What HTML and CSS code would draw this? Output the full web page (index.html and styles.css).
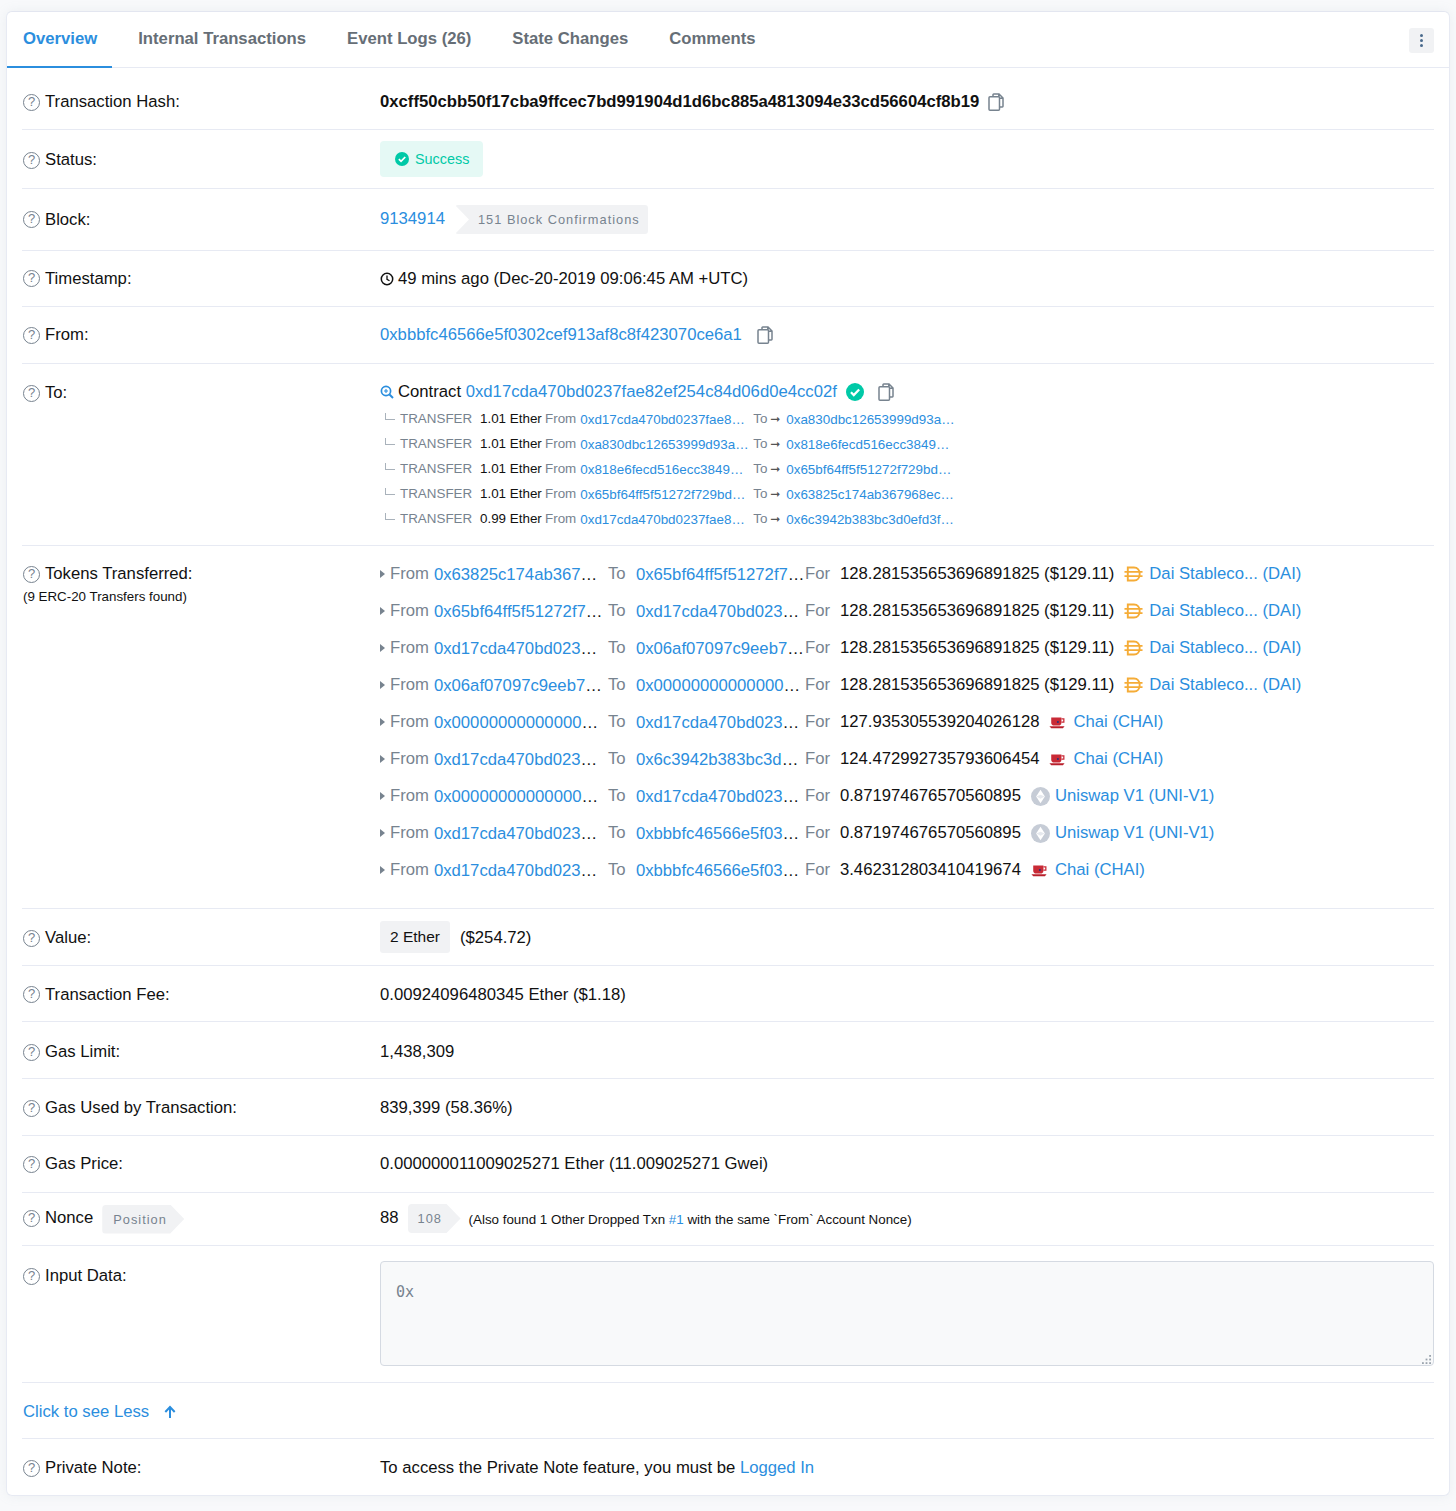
FILE: index.html
```html
<!DOCTYPE html>
<html lang="en">
<head>
<meta charset="utf-8">
<title>Transaction Details</title>
<link rel="stylesheet" href="styles.css">
</head>
<body>
<svg class="defs" width="0" height="0" aria-hidden="true">
  <symbol id="copy" viewBox="0 0 16 18"><path d="M5 3.500V1.700c0-.4.300-.7.700-.7h5.300l4 4v8.300c0 .4-.3.700-.7.700h-2.300M10.800 1v4.300h4.200" fill="none" stroke="currentColor" stroke-width="1.500"/><rect x="1" y="3.800" width="10.500" height="13.400" rx="1" fill="#fff" stroke="currentColor" stroke-width="1.500"/></symbol>
  <symbol id="check" viewBox="0 0 16 16"><circle cx="8" cy="8" r="8" fill="currentColor"/><path d="M4.400 8.200l2.500 2.500 4.800-5" fill="none" stroke="#fff" stroke-width="2"/></symbol>
  <symbol id="dai" viewBox="0 0 20 16"><path d="M4 1.200h6.500c3.800 0 6 2.900 6 6.800s-2.200 6.800-6 6.800H4zM.5 5.800h19M.5 10.200h19" fill="none" stroke="#f5ac37" stroke-width="2"/></symbol>
  <symbol id="chai" viewBox="0 0 18 14"><path d="M2.500 1.500h11.500v5.800c0 1.900-1.400 3.200-3.200 3.200H5.700c-1.800 0-3.200-1.300-3.200-3.200z" fill="#c92a36"/><path d="M14 3h2.700v3.600H14" fill="none" stroke="#c92a36" stroke-width="1.400"/><path d="M.5 11.300h17l-1.800 2.200H2.500z" fill="#b81f2b"/><circle cx="10" cy="6.500" r="1.100" fill="#26307a"/></symbol>
  <symbol id="uni" viewBox="0 0 20 20"><circle cx="10" cy="10" r="10" fill="#c6ccd6"/><path d="M10 2.800l4.600 7.300L10 17.200l-4.600-7.100z" fill="#fff"/><path d="M10 12.400l-4.400-2.300L10 8.200l4.400 1.900z" fill="#e6e9ee"/></symbol>
</svg>

<main class="card">
  <nav class="tabs">
    <a class="tab tab-active">Overview</a>
    <a class="tab">Internal Transactions</a>
    <a class="tab">Event Logs (26)</a>
    <a class="tab">State Changes</a>
    <a class="tab">Comments</a>
    <button class="kebab" aria-label="More"><i></i><i></i><i></i></button>
  </nav>

  <section class="rows">
    <div class="row h62 row-hash"><div class="label"><span class="help">?</span>Transaction Hash:</div><div class="value"><b class="hash">0xcff50cbb50f17cba9ffcec7bd991904d1d6bc885a4813094e33cd56604cf8b19</b><svg class="ic-copy hash-copy"><use href="#copy"/></svg></div></div>

    <div class="row h59"><div class="label drop"><span class="help">?</span>Status:</div><div class="value"><span class="badge"><svg class="ic-check-sm"><use href="#check"/></svg>Success</span></div></div>

    <div class="row h62"><div class="label"><span class="help">?</span>Block:</div><div class="value"><a class="link block-no">9134914</a><span class="tag tag-notch">151 Block Confirmations</span></div></div>

    <div class="row h56"><div class="label"><span class="help">?</span>Timestamp:</div><div class="value"><svg class="ic-clock" viewBox="0 0 14 14"><circle cx="7" cy="7" r="5.700" fill="none" stroke="#111" stroke-width="1.500"/><path d="M7 3.500V7.300l2.500 1.500" fill="none" stroke="#111" stroke-width="1.300"/></svg>49 mins ago (Dec-20-2019 09:06:45 AM +UTC)</div></div>

    <div class="row h57"><div class="label"><span class="help">?</span>From:</div><div class="value"><a class="link">0xbbbfc46566e5f0302cef913af8c8f423070ce6a1</a><svg class="ic-copy from-copy"><use href="#copy"/></svg></div></div>

    <div class="row row-top to-row"><div class="label drop"><span class="help">?</span>To:</div>
      <div class="stack">
        <div class="value contract"><svg class="ic-search" viewBox="0 0 14 14"><circle cx="6" cy="6" r="4.600" fill="none" stroke="#2b8ede" stroke-width="1.700"/><path d="M9.500 9.500l3.500 3.500" stroke="#2b8ede" stroke-width="2"/><path d="M4 6h4M6 4v4" stroke="#2b8ede" stroke-width="1.100"/></svg>Contract&nbsp;<a class="link">0xd17cda470bd0237fae82ef254c84d06d0e4cc02f</a><svg class="ic-check"><use href="#check"/></svg><svg class="ic-copy to-copy"><use href="#copy"/></svg></div>
        <div class="itx"><span class="elbow"></span><span class="itx-type">TRANSFER</span><span class="itx-amt">1.01 Ether</span><span class="muted">From</span><a class="link itx-addr">0xd17cda470bd0237fae8…</a><span class="muted itx-to">To</span><span class="arrow">➞</span><a class="link itx-addr">0xa830dbc12653999d93a…</a></div>
        <div class="itx"><span class="elbow"></span><span class="itx-type">TRANSFER</span><span class="itx-amt">1.01 Ether</span><span class="muted">From</span><a class="link itx-addr">0xa830dbc12653999d93a…</a><span class="muted itx-to">To</span><span class="arrow">➞</span><a class="link itx-addr">0x818e6fecd516ecc3849…</a></div>
        <div class="itx"><span class="elbow"></span><span class="itx-type">TRANSFER</span><span class="itx-amt">1.01 Ether</span><span class="muted">From</span><a class="link itx-addr">0x818e6fecd516ecc3849…</a><span class="muted itx-to">To</span><span class="arrow">➞</span><a class="link itx-addr">0x65bf64ff5f51272f729bd…</a></div>
        <div class="itx"><span class="elbow"></span><span class="itx-type">TRANSFER</span><span class="itx-amt">1.01 Ether</span><span class="muted">From</span><a class="link itx-addr">0x65bf64ff5f51272f729bd…</a><span class="muted itx-to">To</span><span class="arrow">➞</span><a class="link itx-addr">0x63825c174ab367968ec…</a></div>
        <div class="itx"><span class="elbow"></span><span class="itx-type">TRANSFER</span><span class="itx-amt">0.99 Ether</span><span class="muted">From</span><a class="link itx-addr">0xd17cda470bd0237fae8…</a><span class="muted itx-to">To</span><span class="arrow">➞</span><a class="link itx-addr">0x6c3942b383bc3d0efd3f…</a></div>
      </div>
    </div>

    <div class="row row-top tokens-row"><div class="label-block"><div class="label"><span class="help">?</span>Tokens Transferred:</div><div class="label-note">(9 ERC-20 Transfers found)</div></div>
      <div class="stack tokens">
        <div class="tk"><span class="caret"></span><span class="muted">From</span><span class="tk-addr"><a class="link">0x63825c174ab367</a>…</span><span class="muted tk-to">To</span><span class="tk-addr"><a class="link">0x65bf64ff5f51272f7</a>…</span><span class="muted tk-for">For</span><span class="tk-val">128.281535653696891825 ($129.11)</span><svg class="ic-dai"><use href="#dai"/></svg><a class="link">Dai Stableco... (DAI)</a></div>
        <div class="tk"><span class="caret"></span><span class="muted">From</span><span class="tk-addr"><a class="link">0x65bf64ff5f51272f7</a>…</span><span class="muted tk-to">To</span><span class="tk-addr"><a class="link">0xd17cda470bd023</a>…</span><span class="muted tk-for">For</span><span class="tk-val">128.281535653696891825 ($129.11)</span><svg class="ic-dai"><use href="#dai"/></svg><a class="link">Dai Stableco... (DAI)</a></div>
        <div class="tk"><span class="caret"></span><span class="muted">From</span><span class="tk-addr"><a class="link">0xd17cda470bd023</a>…</span><span class="muted tk-to">To</span><span class="tk-addr"><a class="link">0x06af07097c9eeb7</a>…</span><span class="muted tk-for">For</span><span class="tk-val">128.281535653696891825 ($129.11)</span><svg class="ic-dai"><use href="#dai"/></svg><a class="link">Dai Stableco... (DAI)</a></div>
        <div class="tk"><span class="caret"></span><span class="muted">From</span><span class="tk-addr"><a class="link">0x06af07097c9eeb7</a>…</span><span class="muted tk-to">To</span><span class="tk-addr"><a class="link">0x00000000000000</a>…</span><span class="muted tk-for">For</span><span class="tk-val">128.281535653696891825 ($129.11)</span><svg class="ic-dai"><use href="#dai"/></svg><a class="link">Dai Stableco... (DAI)</a></div>
        <div class="tk"><span class="caret"></span><span class="muted">From</span><span class="tk-addr"><a class="link">0x00000000000000</a>…</span><span class="muted tk-to">To</span><span class="tk-addr"><a class="link">0xd17cda470bd023</a>…</span><span class="muted tk-for">For</span><span class="tk-val">127.935305539204026128</span><svg class="ic-chai"><use href="#chai"/></svg><a class="link">Chai (CHAI)</a></div>
        <div class="tk"><span class="caret"></span><span class="muted">From</span><span class="tk-addr"><a class="link">0xd17cda470bd023</a>…</span><span class="muted tk-to">To</span><span class="tk-addr"><a class="link">0x6c3942b383bc3d</a>…</span><span class="muted tk-for">For</span><span class="tk-val">124.472992735793606454</span><svg class="ic-chai"><use href="#chai"/></svg><a class="link">Chai (CHAI)</a></div>
        <div class="tk"><span class="caret"></span><span class="muted">From</span><span class="tk-addr"><a class="link">0x00000000000000</a>…</span><span class="muted tk-to">To</span><span class="tk-addr"><a class="link">0xd17cda470bd023</a>…</span><span class="muted tk-for">For</span><span class="tk-val">0.871974676570560895</span><svg class="ic-uni"><use href="#uni"/></svg><a class="link">Uniswap V1 (UNI-V1)</a></div>
        <div class="tk"><span class="caret"></span><span class="muted">From</span><span class="tk-addr"><a class="link">0xd17cda470bd023</a>…</span><span class="muted tk-to">To</span><span class="tk-addr"><a class="link">0xbbbfc46566e5f03</a>…</span><span class="muted tk-for">For</span><span class="tk-val">0.871974676570560895</span><svg class="ic-uni"><use href="#uni"/></svg><a class="link">Uniswap V1 (UNI-V1)</a></div>
        <div class="tk"><span class="caret"></span><span class="muted">From</span><span class="tk-addr"><a class="link">0xd17cda470bd023</a>…</span><span class="muted tk-to">To</span><span class="tk-addr"><a class="link">0xbbbfc46566e5f03</a>…</span><span class="muted tk-for">For</span><span class="tk-val">3.462312803410419674</span><svg class="ic-chai"><use href="#chai"/></svg><a class="link">Chai (CHAI)</a></div>
      </div>
    </div>

    <div class="row h57"><div class="label drop"><span class="help">?</span>Value:</div><div class="value"><span class="chip">2 Ether</span><span class="usd">($254.72)</span></div></div>
    <div class="row h56 nudge"><div class="label"><span class="help">?</span>Transaction Fee:</div><div class="value">0.00924096480345 Ether ($1.18)</div></div>
    <div class="row h57 nudge-2"><div class="label"><span class="help">?</span>Gas Limit:</div><div class="value">1,438,309</div></div>
    <div class="row h57 nudge"><div class="label"><span class="help">?</span>Gas Used by Transaction:</div><div class="value">839,399 (58.36%)</div></div>
    <div class="row h57"><div class="label"><span class="help">?</span>Gas Price:</div><div class="value">0.000000011009025271 Ether (11.009025271 Gwei)</div></div>

    <div class="row h53"><div class="label label-nonce"><span class="help">?</span>Nonce<span class="tag tag-point tag-position">Position</span></div><div class="value"><span class="nonce-no">88</span><span class="tag tag-point tag-nonce">108</span><span class="small-note">(Also found 1 Other Dropped Txn <a class="link">#1</a> with the same `From` Account Nonce)</span></div></div>

    <div class="row row-top input-row"><div class="label"><span class="help">?</span>Input Data:</div>
      <div class="stack input-wrap"><textarea class="input-data" readonly>0x</textarea>
        <svg class="grip" viewBox="0 0 12 10"><g fill="#9aa3ad"><rect x="9" y="0" width="2" height="2"/><rect x="5" y="4" width="2" height="2"/><rect x="9" y="4" width="2" height="2"/><rect x="1" y="8" width="2" height="2"/><rect x="5" y="8" width="2" height="2"/><rect x="9" y="8" width="2" height="2"/></g></svg>
      </div>
    </div>

    <div class="row h56 nudge"><a class="link see-less">Click to see Less<svg class="ic-up" viewBox="0 0 14 14"><path d="M7 13V2.500M2.300 7L7 2l4.700 5" fill="none" stroke="#2b8ede" stroke-width="2"/></svg></a></div>

    <div class="row h56 row-last nudge"><div class="label"><span class="help">?</span>Private Note:</div><div class="value">To access the Private Note feature, you must be&nbsp;<a class="link">Logged In</a></div></div>
  </section>
</main>
</body>
</html>
```
FILE: styles.css
```css
* { box-sizing: border-box; }
html, body { margin: 0; }
body {
  background: #f8f9fb;
  padding: 11px 6px 16px;
  font-family: "Liberation Sans", Arial, sans-serif;
  font-size: 16.700px;
  color: #111;
}
.defs { position: absolute; }
.card {
  background: #fff;
  border: 1px solid #e7eaf3;
  border-top-color: #e3e6f0;
  border-radius: 6px;
  box-shadow: 0 0 12px rgba(151, 164, 175, .12);
}
.tabs {
  display: flex;
  gap: 11px;
  height: 56px;
  padding-right: 15px;
  border-bottom: 1px solid #e7eaf3;
}
.tab {
  padding: 0 15px 2px;
  height: 56px;
  display: flex;
  align-items: center;
  font-weight: 700;
  color: #666e76;
}
.tab-active {
  color: #2b8ede;
  border-bottom: 2px solid #2b8ede;
  padding: 0 15px 0 16px;
}
.kebab {
  margin: 16px 0 0 auto;
  width: 25px;
  height: 25px;
  background: #f1f2f4;
  border: 0;
  border-radius: 3px;
  display: flex;
  flex-direction: column;
  align-items: center;
  justify-content: center;
  gap: 1.500px;
  padding: 0;
}
.kebab i { width: 3.500px; height: 3.500px; border-radius: 50%; background: #4a6a8c; }
.rows { padding: 0 15px; }
.row {
  display: flex;
  align-items: center;
  border-bottom: 1px solid #e7eaf3;
}
.row-last { border-bottom: 0; }
.row-top { align-items: flex-start; }
.row-hash { padding-top: 7px; }
.nudge { padding-top: 2px; }
.nudge-2 { padding-top: 4px; }
.h53 { min-height: 53px; }
.h56 { min-height: 56px; }
.h57 { min-height: 57px; }
.h59 { min-height: 59px; }
.h62 { min-height: 62px; }
.to-row { height: 182px; padding-top: 18px; }
.tokens-row { height: 363px; padding-top: 9.500px; }
.input-row { height: 137px; padding-top: 15px; }
.label {
  flex: 0 0 358px;
  display: flex;
  align-items: center;
  padding-left: 1px;
}
.drop { padding-top: 2px; }
.label-block { flex: 0 0 358px; }
.input-row .label { padding-top: 5px; }
.label-nonce { margin-bottom: 2px; }
.to-row .label { height: 20px; }
.tokens-row .label { height: 20px; margin-top: 8.500px; }
.label-note { font-size: 13.350px; margin: 5px 0 0 1px; }
.help {
  flex: none;
  width: 17px;
  height: 17px;
  margin-right: 5px;
  border: 1.300px solid #77838f;
  border-radius: 50%;
  color: #77838f;
  font-size: 13px;
  line-height: 14.500px;
  text-align: center;
}
.value { display: flex; align-items: center; flex: 1; min-width: 0; }
.stack { flex: 1; min-width: 0; }
.link { color: #2b8ede; }
.muted { color: #77838f; }
.hash { font-weight: 700; }
.ic-copy { width: 16px; height: 18px; color: #77838f; flex: none; }
.hash-copy { margin-left: 9px; }
.from-copy { margin-left: 15px; }
.to-copy { margin-left: 14px; }
.badge {
  display: inline-flex;
  align-items: center;
  width: 103px;
  height: 36px;
  padding-left: 15px;
  background: #e5f9f5;
  border-radius: 4px;
  color: #00c9a7;
  font-size: 14.400px;
}
.ic-check-sm { width: 14px; height: 14px; color: #00c9a7; margin-right: 6px; }
.ic-check { width: 18px; height: 18px; color: #00c9a7; margin-left: 9px; flex: none; }
.block-no { margin: 0 10px 2px 0; }
.tag {
  display: inline-flex;
  align-items: center;
  height: 29px;
  background: #f1f2f4;
  color: #77838f;
  font-size: 12.800px;
  letter-spacing: 1px;
  border-radius: 3px;
  white-space: nowrap;
}
.tag-notch {
  width: 193px;
  padding-left: 23px;
  clip-path: polygon(0 0, 100% 0, 100% 100%, 0 100%, 14px 50%);
}
.tag-point { clip-path: polygon(0 0, calc(100% - 14px) 0, 100% 50%, calc(100% - 14px) 100%, 0 100%); border-radius: 4px 0 0 4px; }
.tag-position { width: 82px; margin: 2px 0 0 9px; padding-left: 11px; }
.tag-nonce { width: 53px; padding-left: 10px; margin: 0 8px 1px 9px; }
.ic-clock { width: 14px; height: 14px; margin-right: 4px; flex: none; }
.ic-search { width: 14px; height: 14px; margin-right: 4px; flex: none; }
.contract { height: 20px; margin-bottom: 4px; }
.itx {
  display: flex;
  align-items: center;
  height: 25px;
  font-size: 13.400px;
  white-space: nowrap;
}
.elbow {
  width: 10px;
  height: 7px;
  margin: -4px 5px 0 5px;
  border-left: 1.500px solid #a9b2bb;
  border-bottom: 1.500px solid #a9b2bb;
  flex: none;
}
.itx-type { color: #77838f; width: 80px; flex: none; }
.itx-amt { width: 65px; flex: none; }
.itx-addr {
  width: 168px;
  flex: none;
  margin-left: 4px;
  padding-top: 2px;
}
.itx-to { margin-left: 5px; width: 17px; flex: none; }
.arrow { width: 13px; color: #555; flex: none; font-size: 12px; font-family: "DejaVu Sans", sans-serif; }
.arrow + .itx-addr { margin-left: 3px; }
.tk { display: flex; align-items: center; height: 37px; white-space: nowrap; }
.caret {
  width: 0;
  height: 0;
  margin-right: 5px;
  border-left: 5px solid #77838f;
  border-top: 4px solid transparent;
  border-bottom: 4px solid transparent;
  flex: none;
}
.tk .muted { flex: none; }
.tk-addr {
  width: 170px;
  flex: none;
  margin-left: 5px;
  padding-top: 2px;
}
.tk-to { width: 28px; margin-left: 4px; }
.tk-to + .tk-addr { margin-left: 0; width: 169px; }
.tk-for { width: 35px; }
.ic-dai { width: 19px; height: 16px; margin: 0 6px 0 10px; flex: none; }
.ic-chai { width: 16px; height: 13px; margin: 1px 8px 0 10px; flex: none; }
.ic-uni { width: 19px; height: 19px; margin: 0 5px 0 10px; flex: none; }
.chip {
  display: inline-flex;
  align-items: center;
  height: 32px;
  padding: 0 10px;
  margin-right: 10px;
  background: #f1f2f4;
  border-radius: 3px;
  font-size: 15.500px;
}
.usd { padding-top: 2px; }
.nonce-no { margin-bottom: 2px; }
.small-note { font-size: 13.370px; }
.input-wrap { position: relative; }
.input-data {
  display: block;
  width: 100%;
  height: 105px;
  padding: 21px 15px;
  background: #f8f9fa;
  border: 1px solid #d5dae2;
  border-radius: 4px;
  color: #77838f;
  font-family: "DejaVu Sans Mono", monospace;
  font-size: 15px;
  resize: none;
}
.grip { position: absolute; right: 2px; bottom: 2px; width: 11px; height: 9px; }
.see-less { display: flex; align-items: center; margin-left: 1px; }
.ic-up { width: 14px; height: 14px; margin-left: 14px; }
```
